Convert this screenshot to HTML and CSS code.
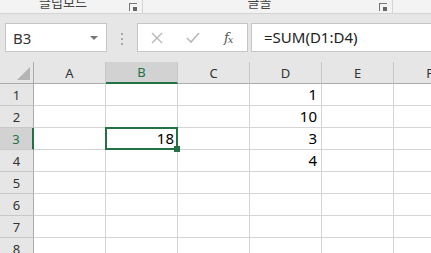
FILE: index.html
```html
<!DOCTYPE html>
<html lang="ko">
<head>
    <meta charset="UTF-8">
    <meta name="viewport" content="width=device-width, initial-scale=1.0">
    <title>Excel - SUM</title>
    <link rel="stylesheet" href="styles.css">
</head>
<body>
    <div class="ribbon">
        <div class="group group-clip">
            <span class="group-label">클립보드</span>
            <span class="launcher"></span>
        </div>
        <div class="group group-font">
            <span class="group-label">글꼴</span>
            <span class="launcher"></span>
        </div>
    </div>

    <div class="formula-bar">
        <div class="name-box">
            <span>B3</span>
            <span class="caret"></span>
        </div>
        <div class="grip"><i></i><i></i><i></i></div>
        <div class="fx-box">
            <svg class="cancel" width="12" height="12" viewBox="0 0 12 12">
                <path d="M1 1 L11 11 M11 1 L1 11" stroke="#b9b9b9" stroke-width="1.4" fill="none"/>
            </svg>
            <svg class="enter" width="14" height="12" viewBox="0 0 14 12">
                <path d="M1 6 L5 10 L13 1" stroke="#b9b9b9" stroke-width="1.6" fill="none"/>
            </svg>
            <span class="fx">f<sub>x</sub></span>
        </div>
        <div class="formula">=SUM(D1:D4)</div>
    </div>

    <div class="sheet">
        <div class="corner"></div>
        <div class="col-head">A</div>
        <div class="col-head active">B</div>
        <div class="col-head">C</div>
        <div class="col-head">D</div>
        <div class="col-head">E</div>
        <div class="col-head">F</div>

        <div class="row-head">1</div>
        <div class="cell"></div><div class="cell"></div><div class="cell"></div>
        <div class="cell num">1</div><div class="cell"></div><div class="cell"></div>

        <div class="row-head">2</div>
        <div class="cell"></div><div class="cell"></div><div class="cell"></div>
        <div class="cell num">10</div><div class="cell"></div><div class="cell"></div>

        <div class="row-head active">3</div>
        <div class="cell"></div><div class="cell num selected">18<span class="handle"></span></div><div class="cell"></div>
        <div class="cell num">3</div><div class="cell"></div><div class="cell"></div>

        <div class="row-head">4</div>
        <div class="cell"></div><div class="cell"></div><div class="cell"></div>
        <div class="cell num">4</div><div class="cell"></div><div class="cell"></div>

        <div class="row-head">5</div>
        <div class="cell"></div><div class="cell"></div><div class="cell"></div>
        <div class="cell"></div><div class="cell"></div><div class="cell"></div>

        <div class="row-head">6</div>
        <div class="cell"></div><div class="cell"></div><div class="cell"></div>
        <div class="cell"></div><div class="cell"></div><div class="cell"></div>

        <div class="row-head">7</div>
        <div class="cell"></div><div class="cell"></div><div class="cell"></div>
        <div class="cell"></div><div class="cell"></div><div class="cell"></div>

        <div class="row-head">8</div>
        <div class="cell"></div><div class="cell"></div><div class="cell"></div>
        <div class="cell"></div><div class="cell"></div><div class="cell"></div>
    </div>
</body>
</html>
```

FILE: styles.css
```css
* {
    box-sizing: border-box;
}

body {
    margin: 0;
    width: 431px;
    height: 253px;
    overflow: hidden;
    font-family: "Noto Sans", "Noto Sans CJK KR", sans-serif;
    background: #ffffff;
    color: #000;
}

/* ribbon (only the bottom strip is visible) */
.ribbon {
    display: flex;
    height: 14px;
    background: #f3f3f3;
    border-bottom: 1px solid #d4d4d4;
    overflow: hidden;
}

.group {
    position: relative;
    display: flex;
    justify-content: center;
    border-right: 1px solid #d4d4d4;
    height: 13px;
}

.group-clip {
    width: 143px;
    padding-right: 16px;
}

.group-font {
    width: 250px;
    padding-right: 16px;
}

.group-label {
    font-family: "Noto Sans CJK KR", sans-serif;
    font-size: 13px;
    line-height: 13px;
    margin-top: -5px;
    color: #444;
}

.launcher {
    position: absolute;
    right: 5px;
    top: 3px;
    width: 8px;
    height: 8px;
    border-left: 1px solid #777;
    border-top: 1px solid #777;
}

.launcher::after {
    content: "";
    position: absolute;
    right: 0;
    bottom: 0;
    width: 4px;
    height: 4px;
    background: #666;
}

/* formula bar */
.formula-bar {
    display: flex;
    align-items: flex-start;
    height: 48px;
    padding-top: 9px;
    background: #e6e6e6;
}

.name-box {
    display: flex;
    align-items: center;
    justify-content: space-between;
    margin-left: 5px;
    width: 102px;
    height: 29px;
    padding: 0 8px 0 7px;
    background: #fff;
    border: 1px solid #c6c6c6;
    font-size: 15px;
    color: #333;
}

.caret {
    width: 0;
    height: 0;
    border-left: 4px solid transparent;
    border-right: 4px solid transparent;
    border-top: 4px solid #777;
}

.grip {
    display: flex;
    flex-direction: column;
    gap: 3px;
    width: 30px;
    align-items: center;
    padding-top: 10px;
}

.grip i {
    width: 2px;
    height: 2px;
    background: #a8a8a8;
}

.fx-box {
    display: flex;
    align-items: center;
    width: 111px;
    height: 29px;
    background: #fff;
    border: 1px solid #c6c6c6;
    padding-left: 13px;
}

.cancel {
    margin-right: 23px;
}

.enter {
    margin-right: 24px;
}

.fx {
    font-family: "DejaVu Serif", serif;
    font-style: italic;
    font-size: 13px;
    color: #555;
    letter-spacing: -1px;
}

.fx sub {
    font-size: 10px;
    vertical-align: -1px;
}

.formula {
    flex: 1;
    height: 29px;
    margin-left: 3px;
    background: #fff;
    border: 1px solid #c6c6c6;
    border-right: none;
    padding-left: 12px;
    font-size: 15px;
    line-height: 26px;
    color: #222;
}

/* sheet grid */
.sheet {
    display: grid;
    grid-template-columns: 34px repeat(6, 72px);
    grid-template-rows: 22px repeat(8, 22px);
    background: #fff;
}

.corner,
.col-head,
.row-head {
    background: #e6e6e6;
    color: #333;
    font-size: 13px;
    display: flex;
    align-items: center;
    justify-content: center;
}

.corner {
    position: relative;
    border-right: 1px solid #ababab;
    border-bottom: 1px solid #ababab;
}

.corner::after {
    content: "";
    position: absolute;
    right: 3px;
    bottom: 3px;
    width: 0;
    height: 0;
    border-left: 13px solid transparent;
    border-bottom: 13px solid #b4b4b4;
}

.col-head {
    border-right: 1px solid #c8c8c8;
    border-bottom: 1px solid #ababab;
}

.col-head.active {
    background: #d2d2d2;
    color: #217346;
    border-bottom: 2px solid #217346;
}

.row-head {
    border-right: 1px solid #ababab;
    border-bottom: 1px solid #c8c8c8;
}

.row-head.active {
    background: #d2d2d2;
    color: #217346;
    border-right: 2px solid #217346;
}

.cell {
    position: relative;
    border-right: 1px solid #d4d4d4;
    border-bottom: 1px solid #d4d4d4;
    font-size: 15px;
    line-height: 21px;
    padding: 0 4px;
}

.num {
    text-align: right;
}

.selected {
    z-index: 1;
    margin: -1px 0 0 -1px;
    border: 2px solid #217346;
    line-height: 19px;
    padding-right: 2px;
}

.handle {
    position: absolute;
    right: -4px;
    bottom: -4px;
    width: 6px;
    height: 6px;
    background: #217346;
}
```
